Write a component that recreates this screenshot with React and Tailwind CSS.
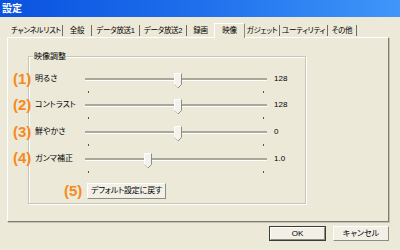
import React from 'react';

const tabs = [
  { label: 'チャンネルリスト', w: 'w-[53px]' },
  { label: '全般', w: 'w-[29px]' },
  { label: 'データ放送1', w: 'w-[48px]' },
  { label: 'データ放送2', w: 'w-[47px]' },
  { label: '録画', w: 'w-[27px]', noSep: true },
  { label: '映像', w: 'w-[31px]', active: true },
  { label: 'ガジェット', w: 'w-[35px]' },
  { label: 'ユーティリティ', w: 'w-[48px]' },
  { label: 'その他', w: 'w-[29px]' },
];

const rows = [
  { label: '明るさ', value: '128', thumb: 89, h: 'h-[26px]' },
  { label: 'コントラスト', value: '128', thumb: 89, h: 'h-[27px]' },
  { label: '鮮やかさ', value: '0', thumb: 89, h: 'h-[27px]' },
  { label: 'ガンマ補正', value: '1.0', thumb: 59, h: 'h-[27px]' },
];

const marks = [
  { n: '(1)', cls: 'left-[13px] top-[71px]' },
  { n: '(2)', cls: 'left-[13px] top-[97px]' },
  { n: '(3)', cls: 'left-[13px] top-[124px]' },
  { n: '(4)', cls: 'left-[13px] top-[150px]' },
  { n: '(5)', cls: 'left-[64px] top-[183px]' },
];

const Thumb = () => (
  <svg width="9" height="16" viewBox="0 0 9 16">
    <polygon points="0.5,0.5 7.5,0.5 7.5,11.5 4,15 0.5,11.5" fill="#f3f2ec" />
    <polyline points="0.5,11.5 0.5,0.5 7.5,0.5" fill="none" stroke="#ffffff" strokeWidth="1" />
    <polyline points="7.5,0.5 7.5,11.5 4,15" fill="none" stroke="#8e8d84" strokeWidth="1" />
    <polyline points="0.5,11.5 4,15" fill="none" stroke="#c6c5bb" strokeWidth="1" />
  </svg>
);

const Slider = ({ thumb }) => (
  <div className="relative w-[182px] h-[27px]">
    <div className="absolute left-0 right-0 top-[5px] h-[3px] border-t-2 border-[#a9a89c] bg-white" />
    <div className="absolute top-0" style={{ left: thumb }}>
      <Thumb />
    </div>
    <div className="absolute left-[3px] top-[18px] w-[1px] h-[2px] bg-[#55554d]" />
    <div className="absolute left-[178px] top-[18px] w-[1px] h-[2px] bg-[#55554d]" />
  </div>
);

const Button = ({ children, className = '' }) => (
  <div
    className={`flex items-center justify-center bg-[#f1efe6] border border-t-white border-l-white border-r-[#8d8c82] border-b-[#8d8c82] text-[8px] text-black whitespace-nowrap ${className}`}
  >
    {children}
  </div>
);

export default function App() {
  return (
    <div className="relative w-[400px] h-[250px] overflow-hidden bg-[#ece9d8] text-black font-['Liberation_Sans','Noto_Sans_CJK_JP',sans-serif] [font-feature-settings:'palt']">
      <div className="h-[17px] bg-linear-to-r from-[#0a52df] via-[#1f6fec] to-[#4096f9] flex items-center pl-[2px] text-white font-bold text-[10px]">
        設定
      </div>

      <div className="pl-[7px]">
        <div className="flex items-end h-[14px] mt-[6px] pl-[3px] relative z-10">
          {tabs.map((t) =>
            t.active ? (
              <div
                key={t.label}
                className={`${t.w} h-[15px] -mb-[1px] bg-[#ece9d8] border-l border-t border-white border-r border-r-[#8d8c82] flex items-center justify-center text-[7.5px] tracking-[-0.3px] leading-none whitespace-nowrap`}
              >
                {t.label}
              </div>
            ) : (
              <div
                key={t.label}
                className={`${t.w} h-[11px] mb-[1px] flex items-center justify-center text-[7.5px] tracking-[-0.3px] leading-none whitespace-nowrap ${t.noSep ? '' : 'border-r border-[#6f6e66]'}`}
              >
                {t.label}
              </div>
            )
          )}
        </div>

        <div className="w-[382px] h-[185px] border border-t-white border-l-white border-r-[#7f7e76] border-b-[#7f7e76] shadow-[1px_1px_0_#c4c2b4] pt-[18px] pl-[20px]">
          <div className="relative w-[278px] h-[148px] border border-[#c8c6b7] shadow-[inset_1px_1px_0_#ffffff,1px_1px_0_#ffffff] pt-[16px]">
            <div className="absolute -top-[6px] left-[4px] px-[1px] bg-[#ece9d8] text-[8px] leading-[11px]">
              映像調整
            </div>

            {rows.map((r) => (
              <div key={r.label} className={`flex ${r.h} pl-[6px]`}>
                <div className="w-[50px] h-[12px] flex items-center text-[8px] whitespace-nowrap">{r.label}</div>
                <Slider thumb={r.thumb} />
                <div className="ml-[7px] h-[12px] flex items-center text-[8px]">{r.value}</div>
              </div>
            ))}

            <div className="pl-[58px] pt-[3px]">
              <Button className="w-[79px] h-[16px] tracking-[-0.2px]">デフォルト設定に戻す</Button>
            </div>
          </div>
        </div>
      </div>

      <div className="flex justify-end gap-[7px] pr-[11px] mt-[4px]">
        <div className="border border-[#3c3c36]">
          <Button className="w-[55px] h-[13px]">OK</Button>
        </div>
        <Button className="w-[56px] h-[15px]">キャンセル</Button>
      </div>

      {marks.map((m) => (
        <div
          key={m.n}
          className={`absolute ${m.cls} text-[15px] leading-[16px] font-bold text-[#f68a1e] font-['Liberation_Sans',sans-serif]`}
        >
          {m.n}
        </div>
      ))}
    </div>
  );
}
